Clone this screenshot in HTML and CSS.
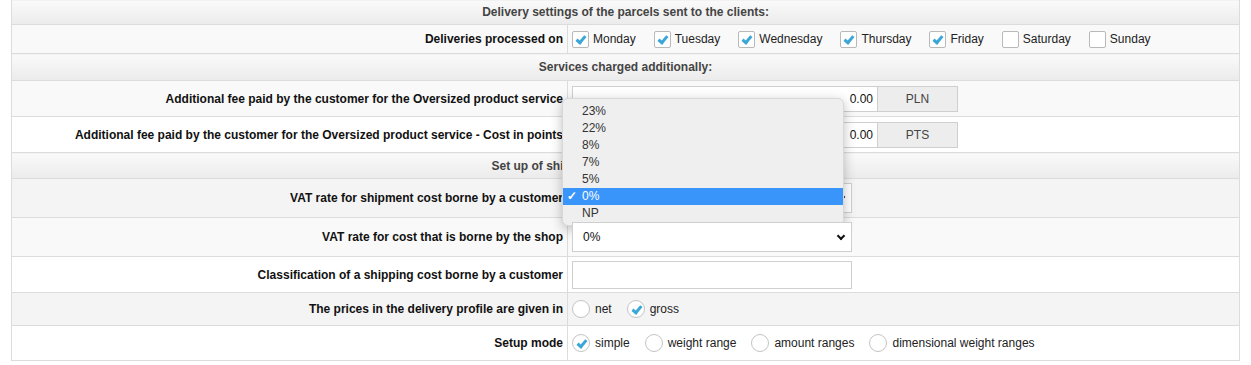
FILE: index.html
```html
<!DOCTYPE html>
<html lang="en">
<head>
    <meta charset="UTF-8">
    <meta name="viewport" content="width=device-width, initial-scale=1.0">
    <title>Delivery profile</title>
    <link rel="stylesheet" href="styles.css">
</head>
<body>
    <div class="container">
        <table class="settings">
            <tr class="head h1">
                <td colspan="2">Delivery settings of the parcels sent to the clients:</td>
            </tr>
            <tr class="r2 grey">
                <td class="label">Deliveries processed on</td>
                <td class="value">
                    <div class="options days">
                        <label class="opt"><span class="box checked"></span>Monday</label>
                        <label class="opt"><span class="box checked"></span>Tuesday</label>
                        <label class="opt"><span class="box checked"></span>Wednesday</label>
                        <label class="opt"><span class="box checked"></span>Thursday</label>
                        <label class="opt"><span class="box checked"></span>Friday</label>
                        <label class="opt"><span class="box"></span>Saturday</label>
                        <label class="opt"><span class="box"></span>Sunday</label>
                    </div>
                </td>
            </tr>
            <tr class="head h2">
                <td colspan="2">Services charged additionally:</td>
            </tr>
            <tr class="r4 grey">
                <td class="label">Additional fee paid by the customer for the Oversized product service</td>
                <td class="value">
                    <div class="group">
                        <div class="field num">0.00</div>
                        <div class="addon">PLN</div>
                    </div>
                </td>
            </tr>
            <tr class="r5">
                <td class="label">Additional fee paid by the customer for the Oversized product service - Cost in points</td>
                <td class="value">
                    <div class="group">
                        <div class="field num">0.00</div>
                        <div class="addon">PTS</div>
                    </div>
                </td>
            </tr>
            <tr class="head h3">
                <td colspan="2">Set up of shipping costs of the delivery profile:</td>
            </tr>
            <tr class="r7 hover">
                <td class="label">VAT rate for shipment cost borne by a customer</td>
                <td class="value">
                    <div class="select-wrap">
                        <div class="select">0%<span class="chev"></span></div>
                        <ul class="popup">
                            <li>23%</li>
                            <li>22%</li>
                            <li>8%</li>
                            <li>7%</li>
                            <li>5%</li>
                            <li class="selected">0%</li>
                            <li>NP</li>
                        </ul>
                    </div>
                </td>
            </tr>
            <tr class="r8 grey">
                <td class="label">VAT rate for cost that is borne by the shop</td>
                <td class="value">
                    <div class="select">0%<span class="chev"></span></div>
                </td>
            </tr>
            <tr class="r9">
                <td class="label">Classification of a shipping cost borne by a customer</td>
                <td class="value">
                    <div class="field text"></div>
                </td>
            </tr>
            <tr class="r10 hover">
                <td class="label">The prices in the delivery profile are given in</td>
                <td class="value">
                    <div class="options">
                        <label class="opt"><span class="radio"></span>net</label>
                        <label class="opt"><span class="radio checked"></span>gross</label>
                    </div>
                </td>
            </tr>
            <tr class="r11">
                <td class="label">Setup mode</td>
                <td class="value">
                    <div class="options">
                        <label class="opt"><span class="radio checked"></span>simple</label>
                        <label class="opt"><span class="radio"></span>weight range</label>
                        <label class="opt"><span class="radio"></span>amount ranges</label>
                        <label class="opt"><span class="radio"></span>dimensional weight ranges</label>
                    </div>
                </td>
            </tr>
        </table>
    </div>
</body>
</html>
```

FILE: styles.css
```css
body {
    margin: 0;
    font-family: "Liberation Sans", Arial, sans-serif;
    font-size: 12px;
    color: #222;
    background: #fff;
}
.container {
    padding-left: 11px;
}
.settings {
    width: 1229px;
    border-collapse: collapse;
    margin-top: -1px;
}
.settings td {
    border: 1px solid #dcdcdc;
    padding: 0;
    vertical-align: middle;
}
.head td {
    text-align: center;
    font-weight: bold;
    color: #444;
    background: linear-gradient(#fafafa, #ebebeb);
}
.h1 td { height: 24px; }
.h2 td { height: 26px; }
.h3 td { height: 25px; }
.r2 td { height: 28px; }
.r4 td { height: 35px; }
.r5 td { height: 35px; }
.r7 td { height: 38px; }
.r8 td { height: 38px; }
.r9 td { height: 35px; }
.r10 td { height: 32px; }
.r11 td { height: 34px; }
.grey td { background: #f9f9f9; }
.hover td { background: #f4f4f4; }
.settings .label {
    width: 551px;
    text-align: right;
    font-weight: bold;
    color: #111;
    padding-right: 4px;
}
.settings .value {
    padding-left: 4px;
}
.options {
    display: flex;
    align-items: center;
    gap: 15px;
}
.days {
    gap: 18px;
}
.opt {
    display: flex;
    align-items: center;
    gap: 4px;
    color: #222;
}
.box {
    width: 15px;
    height: 15px;
    border: 1px solid #b9b9b9;
    border-radius: 2px;
    background: #fff;
    position: relative;
}
.radio {
    width: 16px;
    height: 16px;
    border: 1px solid #c4c4c4;
    border-radius: 50%;
    background: #fff;
    position: relative;
    margin-right: 1px;
}
.box.checked::after,
.radio.checked::after {
    content: "";
    position: absolute;
    left: 5px;
    top: 2px;
    width: 3px;
    height: 7px;
    border: solid #3ba6d8;
    border-width: 0 3px 3px 0;
    transform: rotate(40deg);
}
.radio.checked::after {
    left: 6px;
    top: 3px;
}
.group {
    display: flex;
    height: 26px;
}
.field {
    box-sizing: border-box;
    height: 26px;
    border: 1px solid #cfcfcf;
    background: #fff;
    font-size: 12px;
    color: #111;
}
.num {
    width: 306px;
    text-align: right;
    padding-right: 4px;
    line-height: 24px;
}
.text {
    width: 280px;
    height: 28px;
}
.addon {
    box-sizing: border-box;
    width: 80px;
    border: 1px solid #cfcfcf;
    border-left: none;
    background: #ededed;
    color: #444;
    text-align: center;
    line-height: 24px;
}
.select-wrap {
    position: relative;
}
.select {
    box-sizing: border-box;
    width: 280px;
    height: 30px;
    border: 1px solid #cfcfcf;
    background: #fff;
    padding-left: 10px;
    line-height: 28px;
    font-size: 12px;
    color: #111;
    position: relative;
}
.chev {
    position: absolute;
    right: 7px;
    top: 10px;
    width: 4px;
    height: 4px;
    border: solid #111;
    border-width: 0 2px 2px 0;
    transform: rotate(45deg);
}
.popup {
    position: absolute;
    left: -10px;
    top: -85px;
    width: 280px;
    margin: 0;
    padding: 4px 0 3px;
    list-style: none;
    background: #efefef;
    border: 1px solid #d8d8d8;
    border-radius: 6px;
    box-shadow: 0 3px 12px rgba(0, 0, 0, 0.25);
    font-size: 12px;
    color: #333;
}
.popup li {
    height: 17px;
    line-height: 17px;
    padding-left: 19px;
    position: relative;
}
.popup .selected {
    background: #3a95fb;
    color: #fff;
}
.popup .selected::before {
    content: "\2713";
    position: absolute;
    left: 4px;
    top: 0;
    font-weight: bold;
}
```
